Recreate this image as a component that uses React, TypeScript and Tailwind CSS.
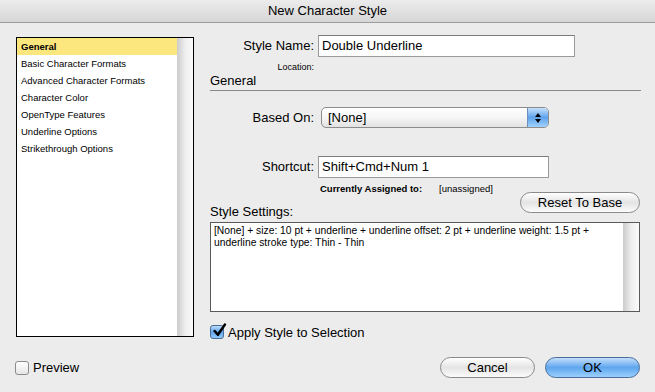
const categories = [
  'General',
  'Basic Character Formats',
  'Advanced Character Formats',
  'Character Color',
  'OpenType Features',
  'Underline Options',
  'Strikethrough Options',
];

function AquaButton({ label, primary = false, className = '' }: { label: string; primary?: boolean; className?: string }) {
  return (
    <button
      type="button"
      className={`flex h-[21px] items-center justify-center rounded-full border text-[13px] leading-none ${
        primary
          ? 'border-[#4a6c9c] bg-gradient-to-b from-[#c3defa] via-[#5ea6ee] to-[#9bd0fc]'
          : 'border-[#8a8a8a] bg-gradient-to-b from-[#ffffff] via-[#e4e4e4] to-[#fbfbfb]'
      } ${className}`}
    >
      {label}
    </button>
  );
}

function Checkbox({ checked }: { checked: boolean }) {
  if (!checked) {
    return <span className="block h-[14px] w-[14px] rounded-[3px] border border-[#8c8c8c] bg-gradient-to-b from-[#ffffff] to-[#e6e6e6]" />;
  }
  return (
    <span className="relative block h-[14px] w-[14px] rounded-[3px] border border-[#4a6a98] bg-gradient-to-b from-[#bcdcfb] via-[#5fa4ec] to-[#93c9f9]">
      <svg viewBox="0 0 14 14" className="absolute -top-[3px] left-[1px] h-[15px] w-[15px]">
        <path d="M2.5 7.5 L5.5 11 L12 1.5" fill="none" stroke="#000" strokeWidth="2.4" strokeLinecap="round" strokeLinejoin="round" />
      </svg>
    </span>
  );
}

export default function App() {
  return (
    <div className="flex h-[392px] w-[655px] flex-col overflow-hidden bg-[#ececec] font-['Liberation_Sans',Arial,sans-serif] text-black">
      <div className="flex h-[23px] items-center justify-center border-b border-[#9c9c9c] bg-gradient-to-b from-[#ececec] to-[#d6d6d6] text-[13px]">
        New Character Style
      </div>

      <div className="flex flex-col pl-[15px]">
        <div className="flex">
          <div className="ml-px mt-[14px] flex h-[300px] w-[178px] border border-black bg-white">
            <ul className="flex-1">
              {categories.map((name, i) => (
                <li
                  key={name}
                  className={`h-[17px] pl-[4px] text-[9.5px] leading-[17px] ${i === 0 ? 'bg-[#fbe77e] font-bold' : ''}`}
                >
                  {name}
                </li>
              ))}
            </ul>
            <div className="w-[16px] bg-gradient-to-r from-[#cbcbcb] via-[#eeeeee] to-[#fbfbfb]" />
          </div>

          <div className="ml-[16px] flex w-[431px] flex-col pt-[12px]">
            <div className="flex h-[22px] items-center">
              <span className="w-[104px] text-right text-[13px]">Style Name:</span>
              <div className="ml-[4px] h-[22px] w-[257px] border border-[#9a9a9a] border-t-[#7c7c7c] bg-white px-[3px] text-[13px] leading-[20px]">
                Double Underline
              </div>
            </div>
            <div className="mt-[5px] h-[10px] w-[104px] text-right text-[9px] leading-[10px]">Location:</div>

            <div className="h-[19px] border-b border-[#8a8a8a] text-[13px] leading-[18px]">General</div>

            <div className="mt-[16px] flex h-[21px] items-center">
              <span className="w-[104px] text-right text-[13px]">Based On:</span>
              <div className="ml-[7px] flex h-[21px] w-[228px] overflow-hidden rounded-[5px] border border-[#8c8c8c] bg-gradient-to-b from-[#ffffff] via-[#f6f6f6] to-[#e2e2e2]">
                <span className="flex-1 pl-[6px] text-[13px] leading-[19px]">[None]</span>
                <span className="flex w-[21px] flex-col items-center justify-center gap-[2px] border-l border-[#6f8fbd] bg-gradient-to-b from-[#c4e0fb] via-[#5fa3ec] to-[#9fd1fb]">
                  <svg viewBox="0 0 6 4" className="h-[4px] w-[6px]">
                    <path d="M3 0 L6 4 L0 4 Z" fill="#000" />
                  </svg>
                  <svg viewBox="0 0 6 4" className="h-[4px] w-[6px]">
                    <path d="M0 0 L6 0 L3 4 Z" fill="#000" />
                  </svg>
                </span>
              </div>
            </div>

            <div className="mt-[28px] flex h-[22px] items-center">
              <span className="w-[104px] text-right text-[13px]">Shortcut:</span>
              <div className="ml-[4px] h-[22px] w-[231px] border border-[#9a9a9a] border-t-[#7c7c7c] bg-white px-[3px] text-[13px] leading-[20px]">
                Shift+Cmd+Num 1
              </div>
            </div>

            <div className="mt-[6px] flex h-[10px] pl-[110px] text-[9.5px] leading-[10px]">
              <span className="w-[119px] font-bold">Currently Assigned to:</span>
              <span>[unassigned]</span>
            </div>

            <div className="flex h-[28px] justify-between">
              <span className="self-end pb-[3px] text-[13px] leading-[15px]">Style Settings:</span>
              <AquaButton label="Reset To Base" className="-mt-[2px] mr-px w-[120px]" />
            </div>

            <div className="flex h-[90px] w-[430px] border border-[#5a5a5a] bg-white">
              <div className="flex-1 px-[3px] pt-[2px] text-[10.3px] leading-[12px]">
                <div className="whitespace-nowrap">[None] + size: 10 pt + underline + underline offset: 2 pt + underline weight: 1.5 pt +</div>
                <div className="whitespace-nowrap">underline stroke type: Thin - Thin</div>
              </div>
              <div className="w-[16px] bg-gradient-to-r from-[#cbcbcb] via-[#eeeeee] to-[#fbfbfb]" />
            </div>

            <div className="mt-[13px] flex h-[14px] items-center">
              <Checkbox checked />
              <span className="ml-[4px] text-[13px] leading-none">Apply Style to Selection</span>
            </div>
          </div>
        </div>

        <div className="mt-[18px] flex h-[21px] items-center pr-[15px]">
          <Checkbox checked={false} />
          <span className="ml-[4px] text-[13px] leading-none">Preview</span>
          <AquaButton label="Cancel" className="ml-auto w-[95px]" />
          <AquaButton label="OK" primary className="ml-[10px] w-[95px]" />
        </div>
      </div>
    </div>
  );
}
